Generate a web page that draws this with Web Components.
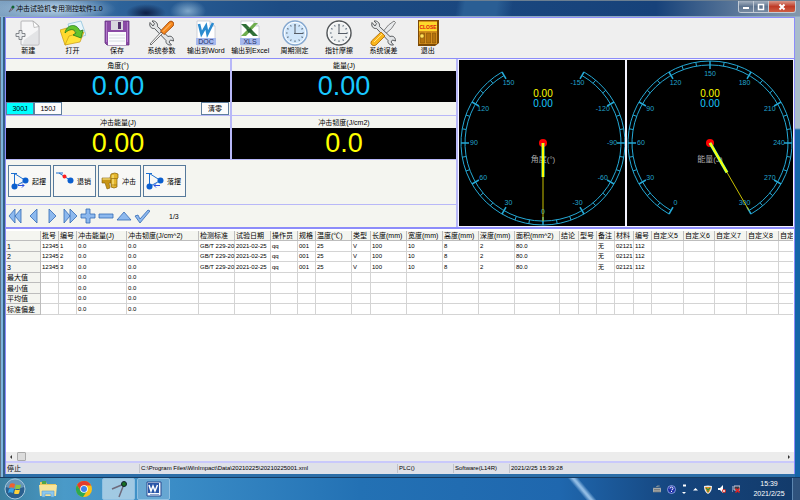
<!DOCTYPE html>
<html lang="zh-CN">
<head>
<meta charset="utf-8">
<title>冲击试验机专用测控软件1.0</title>
<style>
  body {
    margin: 0;
    min-height: 100vh;
    display: flex;
    flex-direction: column;
    font: 7px/9px "Liberation Sans", "Noto Sans CJK SC", sans-serif;
    color: #000;
    background: #1c5790;
    --line: #8c8cfa;
    --line-soft: #b8b8f8;
    --face: #f4f5f0;
    --cyan: #19c8ff;
  }
  app-window { flex: 1; }
</style>
</head>
<body>
<app-window caption="冲击试验机专用测控软件1.0">
  <tool-bar>
    <tool-item icon="new">新建</tool-item>
    <tool-item icon="open">打开</tool-item>
    <tool-item icon="save">保存</tool-item>
    <tool-item icon="params">系统参数</tool-item>
    <tool-item icon="word">输出到Word</tool-item>
    <tool-item icon="excel">输出到Excel</tool-item>
    <tool-item icon="clockBlue">周期测定</tool-item>
    <tool-item icon="clock">指针摩擦</tool-item>
    <tool-item icon="error">系统误差</tool-item>
    <tool-item icon="exit">退出</tool-item>
  </tool-bar>
  <control-panel>
    <value-readout slot="readouts" caption="角度(°)" value="0.00">
      <range-strip slot="strip"></range-strip>
    </value-readout>
    <value-readout slot="readouts" caption="能量(J)" value="0.00"><empty-strip slot="strip"></empty-strip></value-readout>
    <value-readout slot="readouts" caption="冲击能量(J)" value="0.00" tone="yellow"></value-readout>
    <value-readout slot="readouts" caption="冲击韧度(J/cm2)" value="0.0" tone="yellow"></value-readout>
    <action-button slot="actions" icon="raise">起摆</action-button>
    <action-button slot="actions" icon="unpin">退销</action-button>
    <action-button slot="actions" icon="impact">冲击</action-button>
    <action-button slot="actions" icon="lower">落摆</action-button>
    <record-nav slot="nav">1/3</record-nav>
    <dial-gauge slot="dials" kind="angle" caption="角度(°)"></dial-gauge>
    <dial-gauge slot="dials" kind="energy" caption="能量(J)"></dial-gauge>
  </control-panel>
  <test-grid></test-grid>
  <status-bar>
    <span>停止</span>
    <span>C:\Program Files\WinImpact\Data\20210225\20210225001.xml</span>
    <span>PLC()</span>
    <span>Software(L14R)</span>
    <span>2021/2/25 15:39:28</span>
  </status-bar>
</app-window>
<task-bar time="15:39" date="2021/2/25"></task-bar>

<script>
const toolClock = (rim, face) => `
  <circle cx="13" cy="13" r="12" fill="${face}" stroke="${rim}" stroke-width="1.500"/>
  <circle cx="13" cy="13" r="10.700" fill="none" stroke="#fff" stroke-width="1"/>
  <g stroke="#567" stroke-width="1">
    ${[0, 30, 60, 90, 120, 150, 180, 210, 240, 270, 300, 330].map(a =>
      `<path d="M13 4v1.6" transform="rotate(${a} 13 13)"/>`).join('')}
  </g>
  <path d="M13 4.5V14M12 13.5h9" stroke="#555c66" stroke-width="1" fill="none"/>`;

const wrench = `
  <path d="M2 2.5C1 6 3 9 6.500 8.500L18 20.500c-.5 3 2 5 5.500 4.500l-2.500-3 1.500-2 3 1C25.500 17 23 15.500 20 16.500L9.500 6.500C10 3 7.500.5 4 1l2.500 2.700-1.500 2.300z"
    fill="#e2e4e6" stroke="#4a4d50" stroke-width=".9"/>`;

const ICONS = {
  new: `
    <path d="M6 2q0-1 1-1h11l6 5v18q0 1-1 1H7q-1 0-1-1z" fill="#f6f6f7" stroke="#b4b4b8"/>
    <path d="M9 20L23 10v14H8z" fill="#e3e4e6"/>
    <path d="M18 1l6 5.500-5 1z" fill="#fff" stroke="#aaa" stroke-width=".7"/>
    <path d="M4 10.500h3v3h3v3H7v3H4v-3H1v-3h3z" fill="#e8eaec" stroke="#777b80" stroke-width=".9"/>`,
  open: `
    <path d="M8 4l13-3 5 14-13 5z" fill="#e8f5fb" stroke="#8fc3dc" stroke-width=".8"/>
    <path d="M0 10l7-2 2 2 5-1 3 11-12 5z" fill="#ffd92e" stroke="#c79a10" stroke-width=".7"/>
    <path d="M5 25l4-9 15-4-4 10z" fill="#ffe23a" stroke="#c99a12" stroke-width=".7"/>
    <path d="M5 13C6 5 16 2 20 11l3-1-2 8-8-3 3-2c-2-5-7-4-11 0z" fill="#62c32c" stroke="#247b1a" stroke-width=".8"/>`,
  save: `
    <path d="M1 1h24v24H3l-2-2z" fill="#8a4aa5" stroke="#633180" stroke-width=".8"/>
    <path d="M7 1h12v9H7z" fill="#d9d6de"/><path d="M14 2h3v7h-3z" fill="#53306c"/>
    <path d="M4 12h18v13H4z" fill="#fbfbfd"/>
    <path d="M5 15h16M5 18h16M5 21h16" stroke="#d6dce2"/>
    <path d="M2.500 2v20M23.500 2v20" stroke="#bd84d3" stroke-width=".8"/>`,
  params: `${wrench}
    <path d="M2 24l11-12 1.500 1.500L3 25z" fill="#f2f2f2" stroke="#555" stroke-width=".8"/>
    <path d="M12.500 11L21 2q2-2 4 0t0 4l-9 8.500z" fill="#f5871b" stroke="#a3480b" stroke-width=".9"/>
    <path d="M15 11.500l8-8" stroke="#ffc98a"/>`,
  word: `
    <path d="M4 1h13l5 5v19H4z" fill="#fff" stroke="#c4c8d2" stroke-width=".8"/>
    <path d="M17 1v5h5" fill="#e6eaf2" stroke="#c4c8d2" stroke-width=".8"/>
    <path d="M6 4l2.500 10L13 6l1.500 8L20 3" fill="none" stroke="#2a8bd0" stroke-width="2.600"/>
    <path d="M3 18h20v7H3z" fill="#a6b8ee"/>
    <text x="13" y="24" text-anchor="middle" font-size="7" fill="#1f2f66">DOC</text>`,
  excel: `
    <path d="M4 1h13l5 5v19H4z" fill="#fff" stroke="#c4c8d2" stroke-width=".8"/>
    <path d="M17 1v5h5" fill="#e6eaf2" stroke="#c4c8d2" stroke-width=".8"/>
    <path d="M4 4h5l12 12h-5z" fill="#31713a"/>
    <path d="M17 3h4L9 16H4z" fill="#6fae4f"/><path d="M9.500 9.500l4-1.500 2 3-4 2z" fill="#255f32"/>
    <path d="M3 18h20v7H3z" fill="#a6b8ee"/>
    <text x="13" y="24" text-anchor="middle" font-size="7" fill="#1f2f66">XLS</text>`,
  clockBlue: toolClock('#86a8cf', '#cfe5fa'),
  clock: toolClock('#55595c', '#eef0f0'),
  error: `
    <path d="M24 1l1.500 1.500-4 6L13 16l-2-2 7.500-9z" fill="#e8eaec" stroke="#666" stroke-width=".8"/>${wrench}
    <path d="M11 12l4 4-9 9q-2 1.500-4 0t-.5-4z" fill="#f9b61c" stroke="#b26e0a" stroke-width=".9"/>
    <path d="M4 22l8-8" stroke="#ffe28c"/>`,
  exit: `
    <path d="M3 0h21v23l-4 3H3z" fill="#7c4a06"/>
    <path d="M4 1h18v23H4z" fill="#d48f1d"/>
    <path d="M5.500 13h4v10h-4zM11.500 13h4v10h-4zM17.500 13h3v10h-3z" fill="#b4730d" stroke="#7f4c06" stroke-width=".5"/>
    <path d="M4 2h18v9H4z" fill="#fdd92b"/>
    <text x="13" y="9" text-anchor="middle" font-size="5" font-weight="bold" fill="#e01810">CLOSE</text>
    <circle cx="7" cy="16" r="2.200" fill="#ffe25a" stroke="#7f4c06" stroke-width=".6"/>`
};

// pendulum drawings on the action buttons, 18 x 18
const ACTION_ICONS = {
  raise: `
    <path d="M0 1.500h6M3.500 1.500l11 7M3.500 1.500v13M3.500 14.500l11-6" stroke="#1b6fd0" fill="none"/>
    <circle cx="3.500" cy="14.500" r="3" fill="#0b5fcf"/><circle cx="14.500" cy="8.500" r="3" fill="#0b5fcf"/>
    <path d="M7 13.500h6m-2-2l2 2-2 2" stroke="#2a4fe0" fill="none"/>`,
  unpin: `
    <path d="M0 1h7M3 1l11 7" stroke="#1b6fd0" fill="none"/>
    <circle cx="8.500" cy="4.500" r="2" fill="#ff2020"/><circle cx="14.500" cy="8.500" r="3" fill="#0b5fcf"/>`,
  impact: `
    <path d="M1 6h9v5H8l1 5-3 1-2-6H1z" fill="#c79414" stroke="#85600a" stroke-width=".6"/>
    <path d="M10 2q4-2 7 0v4l-1 1v8q-3 2-6 0V7l-1-1z" fill="#e4b52c" stroke="#85600a" stroke-width=".7"/>
    <path d="M1.500 7h8M12 3v11" stroke="#fff09a"/><path d="M10 6.500h6M10 13h6" stroke="#936b0c" stroke-width=".7"/>`,
  lower: `
    <path d="M0 1.500h6M3.500 1.500l11 7M3.500 1.500v13M3.500 14.500l11-6" stroke="#1b6fd0" fill="none"/>
    <circle cx="3.500" cy="14.500" r="3" fill="#0b5fcf"/><circle cx="14.500" cy="8.500" r="3" fill="#0b5fcf"/>
    <path d="M14 13.500H8m2-2l-2 2 2 2" stroke="#2a4fe0" fill="none"/>`
};

const NAV_ICONS = [
  ['首条', '<path d="M7 1v14L1 8zM13 1v14L7 8z"/>'],
  ['上一条', '<path d="M11 1v14L4 8z"/>'],
  ['下一条', '<path d="M5 1v14l7-7z"/>'],
  ['末条', '<path d="M2 1v14l6-7zM8 1v14l7-7z"/>'],
  ['添加', '<path d="M6 1h4v5h5v4h-5v5H6v-5H1V6h5z"/>'],
  ['删除', '<path d="M1 6h14v4H1z"/>'],
  ['编辑', '<path d="M8 4l7 8H1z"/>'],
  ['确认', '<path d="M1 8l3-1 2 4L14 2l2 1L6 15z"/>']
];

class AppWindow extends HTMLElement {
  constructor() {
    super();
    this.attachShadow({ mode: 'open' });
    this.shadowRoot.innerHTML = `
      <style>
        :host {
          display: flex;
          flex-direction: column;
          box-sizing: border-box;
          padding: 0 5px 3px;
          background:
            linear-gradient(to right, #5f7183 0 1px, #7eb4dc 1px 3px, #345f88 3px 5px, transparent 5px),
            linear-gradient(to bottom, #a9bccb 0 128px, #1565a8 130px) right / 5px 100% no-repeat,
            #2c6ea8;
          border-bottom: 1px solid #163b62;
        }
        header {
          display: flex;
          align-items: center;
          gap: 1px;
          height: 17px;
          margin: 0 -5px;
          padding: 0 4px 0 8px;
          box-sizing: border-box;
          border-top: 1px solid #6b7f92;
          border-bottom: 1px solid #8da9c2;
          background:
            radial-gradient(ellipse 20px 9px at 146px 12px, #0e1f46, transparent),
            radial-gradient(ellipse 18px 11px at 188px 10px, #7ea6c9, transparent),
            radial-gradient(ellipse 60px 14px at 56px 8px, #b9d3e8, transparent),
            linear-gradient(100deg, transparent 57%, #2a5e94 58% 62%, transparent 64%),
            linear-gradient(to right, #7fa2c2, #2d639a 15%, #1d4c84 35%, #17427a 82%, #6d86a2 95%, #8397ab);
        }
        .mark { width: 7px; height: 8px; }
        h1 { flex: 1; margin: 0; font: inherit; }
        nav {
          display: flex;
          align-self: flex-start;
          height: 11px;
          border: 1px solid #c3ccd6;
          border-top: 0;
          border-radius: 0 0 3px 3px;
          overflow: hidden;
        }
        button {
          width: 15px;
          padding: 0;
          border: 0;
          border-right: 1px solid #c3ccd6;
          background: linear-gradient(#a5b1c0, #5f7590 50%, #7689a0);
          display: grid;
          place-items: center;
        }
        button:last-child { width: 26px; border-right: 0; background: linear-gradient(#d99a8c, #bf3b27 50%, #cf5d42); }
        svg { display: block; }
        main {
          flex: 1;
          display: flex;
          flex-direction: column;
          min-width: 0;
          border: solid var(--line);
          border-width: 1px 1px 0;
          background: #fff;
        }
      </style>
      <header>
        <svg class="mark" viewBox="0 0 7 8"><path d="M1 7l3-5 1 2z" stroke="#667" fill="#99a"/><circle cx="5" cy="2" r="1.500" fill="#163"/></svg>
        <h1></h1>
        <nav>
          <button aria-label="最小化"><svg width="8" height="8"><path d="M1 4h6v2H1z" fill="#fff"/></svg></button>
          <button aria-label="最大化"><svg width="8" height="8"><path d="M1.500 1.500h5v5h-5z" fill="none" stroke="#fff" stroke-width="1.500"/></svg></button>
          <button aria-label="关闭"><svg width="8" height="8"><path d="M1.500 1.500l5 5m0-5l-5 5" stroke="#fff" stroke-width="2"/></svg></button>
        </nav>
      </header>
      <main><slot></slot></main>
    `;
  }

  connectedCallback() {
    this.shadowRoot.querySelector('h1').textContent = this.getAttribute('caption');
  }
}

class ToolBar extends HTMLElement {
  constructor() {
    super();
    this.attachShadow({ mode: 'open' });
    this.shadowRoot.innerHTML = `
      <style>
        :host {
          display: block;
          height: 40px;
          background: #efefef;
          border-bottom: 1px solid var(--line);
        }
        div { display: grid; grid-template-columns: repeat(10, 1fr); width: 444px; }
      </style>
      <div><slot></slot></div>
    `;
  }
}

class ToolItem extends HTMLElement {
  constructor() {
    super();
    this.attachShadow({ mode: 'open' });
  }

  connectedCallback() {
    this.shadowRoot.innerHTML = `
      <style>
        :host { display: block; }
        button {
          display: flex;
          flex-direction: column;
          align-items: center;
          width: 100%;
          padding: 2px 0 0;
          border: 0;
          background: none;
          font: inherit;
          color: inherit;
          white-space: nowrap;
        }
        svg { width: 26px; height: 26px; }
      </style>
      <button><svg viewBox="0 0 26 26" aria-hidden="true">${ICONS[this.getAttribute('icon')]}</svg><slot></slot></button>
    `;
  }
}

class ControlPanel extends HTMLElement {
  constructor() {
    super();
    this.attachShadow({ mode: 'open' });
    this.shadowRoot.innerHTML = `
      <style>
        :host {
          display: grid;
          grid-template-columns: 452fr 336fr;
          border-bottom: 2px solid var(--line);
          background: #f3f3ff;
        }
        .left { background: var(--face); border-right: 2px solid var(--line-soft); }
        .readouts {
          display: grid;
          grid-template-columns: 1fr 1fr;
          column-gap: 2px;
          background: var(--line-soft);
        }
        .actions {
          display: flex;
          gap: 2px;
          padding: 5px 2px 7px;
          border-bottom: 1px solid var(--line-soft);
        }
        .dials { display: grid; grid-template-columns: 1fr 1fr; gap: 2px; padding: 1px; }
      </style>
      <div class="left">
        <div class="readouts"><slot name="readouts"></slot></div>
        <div class="actions"><slot name="actions"></slot></div>
        <slot name="nav"></slot>
      </div>
      <div class="dials"><slot name="dials"></slot></div>
    `;
  }
}

class ValueReadout extends HTMLElement {
  constructor() {
    super();
    this.attachShadow({ mode: 'open' });
  }

  connectedCallback() {
    this.shadowRoot.innerHTML = `
      <style>
        :host {
          display: block;
          background: var(--face);
          border-bottom: 1px solid var(--line-soft);
          text-align: center;
        }
        .caption { padding: 2px 0 1px; }
        .value {
          background: #000;
          color: var(--cyan);
          font-size: 27px;
          line-height: 31px;
        }
        :host([tone="yellow"]) .value { color: #ff0; }
      </style>
      <div class="caption">${this.getAttribute('caption')}</div>
      <div class="value">${this.getAttribute('value')}</div>
      <slot name="strip"></slot>
    `;
  }
}

class RangeStrip extends HTMLElement {
  constructor() {
    super();
    this.attachShadow({ mode: 'open' });
    this.shadowRoot.innerHTML = `
      <style>
        :host { display: flex; height: 13px; }
        button {
          width: 28px;
          padding: 0;
          border: 1px solid #5f7f9d;
          background: #fcfcfc;
          font: inherit;
          line-height: 9px;
        }
        .on { background: #0ff; }
        .clear { margin-left: auto; margin-right: 1px; }
      </style>
      <button class="on">300J</button><button>150J</button><button class="clear">清零</button>
    `;
  }
}

class EmptyStrip extends HTMLElement {
  constructor() {
    super();
    this.attachShadow({ mode: 'open' });
    this.shadowRoot.innerHTML = `<style>:host { display: block; height: 13px; }</style>`;
  }
}

class ActionButton extends HTMLElement {
  constructor() {
    super();
    this.attachShadow({ mode: 'open' });
  }

  connectedCallback() {
    this.shadowRoot.innerHTML = `
      <style>
        :host { display: block; }
        button {
          display: flex;
          align-items: center;
          gap: 3px;
          width: 43px;
          height: 32px;
          padding: 0 2px;
          border: 1px solid #56799b;
          background: #f8f8f6;
          font: inherit;
          white-space: nowrap;
        }
        svg { flex: none; width: 18px; height: 18px; }
      </style>
      <button><svg viewBox="0 0 18 18" aria-hidden="true">${ACTION_ICONS[this.getAttribute('icon')]}</svg><slot></slot></button>
    `;
  }
}

class RecordNav extends HTMLElement {
  constructor() {
    super();
    this.attachShadow({ mode: 'open' });
    this.shadowRoot.innerHTML = `
      <style>
        :host { display: flex; align-items: center; gap: 2px; height: 22px; padding-left: 2px; }
        button { width: 16px; padding: 0; border: 0; background: none; }
        svg { display: block; width: 16px; height: 16px; fill: #8db9ee; stroke: #3469b4; stroke-width: .8; }
        span { margin-left: 17px; }
      </style>
      ${NAV_ICONS.map(([name, shape]) =>
        `<button aria-label="${name}"><svg viewBox="0 0 16 16">${shape}</svg></button>`).join('')}
      <span><slot></slot></span>
    `;
  }
}

class DialGauge extends HTMLElement {
  constructor() {
    super();
    this.attachShadow({ mode: 'open' });
  }

  connectedCallback() {
    const energy = this.getAttribute('kind') === 'energy';
    const cx = energy ? 83 : 84, cy = 83;
    // angle in degrees, clockwise from straight down
    const at = (r, deg) => {
      const a = deg * Math.PI / 180;
      return [(cx - r * Math.sin(a)).toFixed(1), (cy + r * Math.cos(a)).toFixed(1)];
    };
    const start = energy ? 30 : -150;
    const end = energy ? 330 : 150;

    const arc = r => `<path d="M${at(r, start)}A${r} ${r} 0 1 1 ${at(r, end)}"/>`;
    let ticks = '';
    let labels = '';
    for (let deg = start; deg <= end; deg += 10) {
      const major = (deg - start) % 30 === 0;
      ticks += `<path d="M${at(major ? 74 : 78, deg)}L${at(82, deg)}" ${major ? 'stroke-width="1.500"' : ''}/>`;
      if (major) {
        const [x, y] = at(69, deg);
        labels += `<text x="${x}" y="${+y + 2}">${energy ? deg - 30 : deg}</text>`;
      }
    }
    const needle = energy ? 330 : 0;

    this.shadowRoot.innerHTML = `
      <style>
        :host { display: block; background: #000; min-width: 0; }
        svg { display: block; width: 100%; height: 100%; }
        .scale { fill: none; stroke: #25a9d6; }
        .labels { fill: #22a4cc; font-size: 7px; text-anchor: middle; }
        .value { font-size: 10px; text-anchor: middle; }
        .caption { fill: #aaa; font-size: 8px; text-anchor: middle; }
      </style>
      <svg viewBox="0 0 166 166">
        <g class="scale">${arc(82)}${arc(78)}${ticks}</g>
        <g class="labels">${labels}</g>
        <text class="value" x="${cx}" y="37" fill="#ff0">0.00</text>
        <text class="value" x="${cx}" y="47" fill="#19c8ff">0.00</text>
        <text class="caption" x="${cx}" y="102">${this.getAttribute('caption')}</text>
        <circle cx="${cx}" cy="${cy}" r="4" fill="#f00"/>
        <path d="M${cx} ${cy}L${at(34, needle)}" stroke="#5fffb0" stroke-width="3"/>
        <path d="M${cx} ${cy}L${at(34, needle)}" stroke="#ff0" stroke-width="2"/>
        <path d="M${at(34, needle)}L${at(78, needle)}" stroke="#c8c000"/>
      </svg>
    `;
  }
}

class TestGrid extends HTMLElement {
  constructor() {
    super();
    this.attachShadow({ mode: 'open' });

    const columns = [
      ['', 35], ['批号', 18], ['编号', 18], ['冲击能量(J)', 50], ['冲击韧度(J/cm^2)', 72],
      ['检测标准', 36], ['试验日期', 36], ['操作员', 27], ['规格', 18], ['温度(℃)', 36],
      ['类型', 19], ['长度(mm)', 36], ['宽度(mm)', 36], ['高度(mm)', 36], ['深度(mm)', 36],
      ['面积(mm^2)', 45], ['结论', 19], ['型号', 18], ['备注', 18], ['材料', 19], ['编号', 18],
      ['自定义5', 32], ['自定义6', 31], ['自定义7', 32], ['自定义8', 32], ['自定', 32]
    ];
    const sample = n => [n, '12345', n, '0.0', '0.0', 'GB/T 229-20', '2021-02-25', 'qq', '001', '25', 'V',
      '100', '10', '8', '2', '80.0', '', '', '无', '02121', '112'];
    const summary = name => [name, '', '', '0.0', '0.0'];
    const rows = [
      sample('1'), sample('2'), sample('3'),
      summary('最大值'), summary('最小值'), summary('平均值'), summary('标准偏差')
    ];
    const total = columns.reduce((sum, c) => sum + c[1], 0);

    this.shadowRoot.innerHTML = `
      <style>
        :host {
          flex: 1;
          display: flex;
          flex-direction: column;
          min-height: 0;
          padding-top: 2px;
          border-bottom: 2px solid #c9c9fb;
        }
        .view { flex: 1; overflow: hidden; margin-right: 1px; }
        table {
          table-layout: fixed;
          border-collapse: separate;
          border-spacing: 0;
          width: ${total}px;
        }
        th, td {
          height: 10px;
          padding: 0 0 0 1px;
          box-sizing: border-box;
          border: solid #d4d4d4;
          border-width: 0 1px 1px 0;
          font-weight: normal;
          text-align: left;
          white-space: nowrap;
        }
        td { font-size: 6px; }
        tbody tr:nth-child(odd) > * { height: 11px; }
        th { background: var(--face); border-color: #bdbdbd; }
        .bar {
          display: flex;
          align-items: center;
          justify-content: space-between;
          height: 9px;
          padding: 0 4px;
          background: #ececec;
        }
        .bar i { width: 0; height: 0; border: 2px solid transparent; border-right-color: #333; border-left: 0; }
        .bar i:last-child { border-left: 2px solid #333; border-right: 0; }
        .thumb { width: 7px; height: 7px; margin: 0 auto 0 5px; border: 1px solid #aaa; border-radius: 1px; background: #dcdcdc; }
      </style>
      <div class="view">
        <table>
          <colgroup>${columns.map(c => `<col style="width:${c[1]}px">`).join('')}</colgroup>
          <thead><tr>${columns.map(c => `<th>${c[0]}</th>`).join('')}</tr></thead>
          <tbody>${rows.map(r => `<tr>${columns.map((c, i) =>
            i === 0 ? `<th scope="row">${r[0]}</th>` : `<td>${r[i] || ''}</td>`).join('')}</tr>`).join('')}</tbody>
        </table>
      </div>
      <div class="bar"><i></i><span class="thumb"></span><i></i></div>
    `;
  }
}

class StatusBar extends HTMLElement {
  constructor() {
    super();
    this.attachShadow({ mode: 'open' });
    this.shadowRoot.innerHTML = `
      <style>
        :host {
          display: grid;
          grid-template-columns: 133fr 258fr 56fr 56fr 285fr;
          align-items: center;
          height: 11px;
          background: #dfe1e8;
          font-size: 6px;
        }
        ::slotted(span) { padding-left: 1px; border-left: 1px solid #c0c3cc; white-space: nowrap; }
        ::slotted(span:first-child) { border-left: 0; font-size: 7px; }
      </style>
      <slot></slot>
    `;
  }
}

class TaskBar extends HTMLElement {
  constructor() {
    super();
    this.attachShadow({ mode: 'open' });
  }

  connectedCallback() {
    this.shadowRoot.innerHTML = `
      <style>
        :host {
          display: flex;
          align-items: center;
          height: 22px;
          color: #fff;
          background:
            linear-gradient(50deg, transparent 42%, #8fbbe4 48% 50%, transparent 56%) 553px 0 / 60px 100% no-repeat,
            linear-gradient(to right, #3b7f9f, #4a9ac8 8%, #3a8cc6 22%, #2371b4 45%, #1f67ae 70%, #15447c 85%, #123a6a);
        }
        button { padding: 0; border: 0; background: none; display: grid; place-items: center; height: 22px; }
        .start { width: 30px; }
        .pin { width: 36px; }
        .task { width: 33px; margin-right: 2px; border: 1px solid #8fc0e2; border-radius: 2px; background: #ffffff38; }
        .task.active { background: #ffffff80; }
        .tray { display: flex; align-items: center; gap: 6px; margin-left: auto; }
        .clock { width: 46px; text-align: center; line-height: 10px; }
        .peek { width: 7px; align-self: stretch; border-left: 1px solid #5c86b0; background: #ffffff20; }
        svg { display: block; }
      </style>
      <button class="start" aria-label="开始">
        <svg width="22" height="22" viewBox="0 0 22 22">
          <circle cx="11" cy="11" r="10" fill="#2a5f8e" stroke="#a9cbe0"/><path d="M2 9a9 9 0 0 1 18 0q-9 4-18 0z" fill="#8fb9d4" opacity=".6"/>
          <path d="M6 6q2-1.500 5 0l-1 4q-3-1.500-5 0z" fill="#f2612c"/><path d="M12 6.500q3 1 5 0l-1 4q-2 1-5 0z" fill="#8cc63e"/>
          <path d="M5 11q2-1.500 5 0l-1 4q-3-1.500-5 0z" fill="#35a4e8"/><path d="M11 11.500q3 1 5 0l-1 4q-2 1-5 0z" fill="#ffd23a"/>
        </svg>
      </button>
      <button class="pin" aria-label="资源管理器">
        <svg width="20" height="18" viewBox="0 0 20 18"><path d="M2 2h6l1 2h9v12H2z" fill="#e9c75c"/><path d="M4 1h4v3H4z" fill="#4ca64c"/><path d="M1 5h18l-1 11H2z" fill="#f8e49b"/><path d="M4 17v-6h12v6h-3v-3H7v3z" fill="#8cc8ee" stroke="#5c9dcc" stroke-width=".6"/></svg>
      </button>
      <button class="pin" aria-label="浏览器">
        <svg width="18" height="18" viewBox="0 0 18 18">
          <circle cx="9" cy="9" r="8" fill="#fbc116"/>
          <path d="M2 5a8 8 0 0 1 14.200 0.500H9L5.700 11z" fill="#e33b2e"/><path d="M2 5a8 8 0 0 0 6 12l4.300-6.500-6.600.5z" fill="#2da94f"/>
          <circle cx="9" cy="9" r="3.800" fill="#fff"/><circle cx="9" cy="9" r="3" fill="#3b82ef"/>
        </svg>
      </button>
      <button class="task active" aria-label="冲击试验机">
        <svg width="18" height="18" viewBox="0 0 18 18"><path d="M14 4L2 9M14 4L9 17" stroke="#6d6a7c" stroke-width="1.500"/><circle cx="14" cy="4" r="2.500" fill="#176f22" stroke="#123"/></svg>
      </button>
      <button class="task" aria-label="文档">
        <svg width="16" height="16" viewBox="0 0 16 16"><path d="M1 1h14v14H1z" fill="#f5f8ff" stroke="#27488f"/><path d="M2 2h11v10H2z" fill="#2a56a8"/><path d="M3 4l2 6 2-5 2 5 2.500-6" fill="none" stroke="#fff" stroke-width="1.500"/><path d="M4 13.500h9" stroke="#8ca4d0"/></svg>
      </button>
      <div class="tray">
        <svg width="8" height="8" viewBox="0 0 8 8"><path d="M0 3h8v4H0zM3 2q1-2 4-1" fill="#b8bbb8" stroke="#80868a" stroke-width=".6"/><path d="M1 4.500h6M1 6h6" stroke="#555" stroke-width=".6"/></svg>
        <svg width="9" height="9" viewBox="0 0 9 9"><circle cx="4.500" cy="4.500" r="4" fill="#1c2ea8" stroke="#9fb4e8" stroke-width=".8"/><path d="M3 3.500q0-1.500 1.500-1.500T6 3.500 4.500 5M4.500 6v1" fill="none" stroke="#fff"/></svg>
        <svg width="5" height="12" viewBox="0 0 5 12"><path d="M1 1.500h3v2H1z" fill="#fff"/><path d="M0 9h4l-2 2z" fill="#fff"/></svg>
        <svg width="5" height="4" viewBox="0 0 5 4"><path d="M0 3.500h5L2.500 1z" fill="#fff"/></svg>
        <svg width="8" height="9" viewBox="0 0 8 9"><path d="M0 1q4-1 8 0 0 6-4 8-4-2-4-8z" fill="#e9ecef"/><path d="M1 2h6Q6 7 4 8 2 7 1 2z" fill="#f08a1c"/><path d="M2 3l2 2 2-2M4 5v2" stroke="#2c8f3a" stroke-width="1.200" fill="none"/></svg>
        <svg width="8" height="8" viewBox="0 0 8 8"><path d="M0 3h2l3-3v8L2 5H0z" fill="#fff"/><circle cx="6" cy="6" r="2" fill="#d8322a"/><path d="M5 5l2 2m0-2L5 7" stroke="#fff" stroke-width=".7"/></svg>
        <svg width="8" height="8" viewBox="0 0 8 8"><path d="M0 1v6M2 1h6v4H2z" stroke="#ccd" fill="#333b48"/><path d="M3.500 3.500l4 4m0-4l-4 4" stroke="#e02020" stroke-width="1.500"/></svg>
        <div class="clock">${this.getAttribute('time')}<br>${this.getAttribute('date')}</div>
      </div>
      <div class="peek"></div>
    `;
  }
}

customElements.define('app-window', AppWindow);
customElements.define('tool-bar', ToolBar);
customElements.define('tool-item', ToolItem);
customElements.define('control-panel', ControlPanel);
customElements.define('value-readout', ValueReadout);
customElements.define('range-strip', RangeStrip);
customElements.define('empty-strip', EmptyStrip);
customElements.define('action-button', ActionButton);
customElements.define('record-nav', RecordNav);
customElements.define('dial-gauge', DialGauge);
customElements.define('test-grid', TestGrid);
customElements.define('status-bar', StatusBar);
customElements.define('task-bar', TaskBar);
</script>
</body>
</html>
